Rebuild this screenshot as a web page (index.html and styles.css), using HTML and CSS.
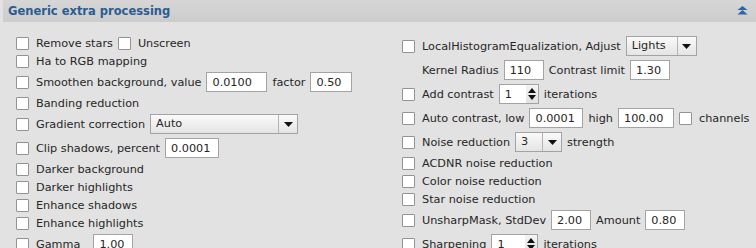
FILE: index.html
```
<!DOCTYPE html>
<html lang="en">
<head>
    <meta charset="UTF-8">
    <title>Generic extra processing</title>
    <link rel="stylesheet" href="styles.css">
</head>
<body>

    <!-- Panel -->
    <div class="panel">
        <div class="panel-head">
            <span class="panel-title">Generic extra processing</span>
            <svg class="collapse" width="11" height="9" viewBox="0 0 11 9">
                <path d="M5.5 0 L10.5 4 L0.5 4 Z" fill="#2c66a8"/>
                <path d="M5.5 4 L10.5 8.5 L0.5 8.5 Z" fill="#2c66a8"/>
            </svg>
        </div>

        <div class="panel-body">
            <!-- Left column -->
            <div class="col">
                <div class="row">
                    <input type="checkbox" class="cb"><span>Remove stars</span>
                    <input type="checkbox" class="cb cb-inline"><span>Unscreen</span>
                </div>
                <div class="row">
                    <input type="checkbox" class="cb"><span>Ha to RGB mapping</span>
                </div>
                <div class="row tall">
                    <input type="checkbox" class="cb"><span>Smoothen background, value</span>
                    <input type="text" class="num w61" value="0.0100">
                    <span>factor</span>
                    <input type="text" class="num w42" value="0.50">
                </div>
                <div class="row">
                    <input type="checkbox" class="cb"><span>Banding reduction</span>
                </div>
                <div class="row tall">
                    <input type="checkbox" class="cb"><span>Gradient correction</span>
                    <div class="select w148">
                        <span class="select-value">Auto</span>
                        <span class="select-arrow"><svg width="9" height="5" viewBox="0 0 9 5"><path d="M0 0 H9 L4.5 5 Z" fill="#111"/></svg></span>
                    </div>
                </div>
                <div class="row tall">
                    <input type="checkbox" class="cb"><span>Clip shadows, percent</span>
                    <input type="text" class="num w54" value="0.0001">
                </div>
                <div class="row">
                    <input type="checkbox" class="cb"><span>Darker background</span>
                </div>
                <div class="row">
                    <input type="checkbox" class="cb"><span>Darker highlights</span>
                </div>
                <div class="row">
                    <input type="checkbox" class="cb"><span>Enhance shadows</span>
                </div>
                <div class="row">
                    <input type="checkbox" class="cb"><span>Enhance highlights</span>
                </div>
                <div class="row tall">
                    <input type="checkbox" class="cb"><span class="gamma">Gamma</span>
                    <input type="text" class="num w40" value="1.00">
                </div>
            </div>

            <!-- Right column -->
            <div class="col">
                <div class="row tall">
                    <input type="checkbox" class="cb"><span>LocalHistogramEqualization, Adjust</span>
                    <div class="select w71">
                        <span class="select-value">Lights</span>
                        <span class="select-arrow"><svg width="9" height="5" viewBox="0 0 9 5"><path d="M0 0 H9 L4.5 5 Z" fill="#111"/></svg></span>
                    </div>
                </div>
                <div class="row tall indent">
                    <span>Kernel Radius</span>
                    <input type="text" class="num w40" value="110">
                    <span>Contrast limit</span>
                    <input type="text" class="num w40" value="1.30">
                </div>
                <div class="row tall">
                    <input type="checkbox" class="cb"><span>Add contrast</span>
                    <div class="spin w40">
                        <input type="text" value="1">
                        <span class="spin-btns">
                            <svg width="8" height="5" viewBox="0 0 8 5"><path d="M4 0 L8 5 H0 Z" fill="#111"/></svg>
                            <svg width="8" height="5" viewBox="0 0 8 5"><path d="M0 0 H8 L4 5 Z" fill="#111"/></svg>
                        </span>
                    </div>
                    <span>iterations</span>
                </div>
                <div class="row tall">
                    <input type="checkbox" class="cb"><span>Auto contrast, low</span>
                    <input type="text" class="num w54" value="0.0001">
                    <span>high</span>
                    <input type="text" class="num w56" value="100.00">
                    <input type="checkbox" class="cb cb-inline"><span>channels</span>
                </div>
                <div class="row tall">
                    <input type="checkbox" class="cb"><span>Noise reduction</span>
                    <div class="select w47">
                        <span class="select-value">3</span>
                        <span class="select-arrow"><svg width="9" height="5" viewBox="0 0 9 5"><path d="M0 0 H9 L4.5 5 Z" fill="#111"/></svg></span>
                    </div>
                    <span>strength</span>
                </div>
                <div class="row">
                    <input type="checkbox" class="cb"><span>ACDNR noise reduction</span>
                </div>
                <div class="row">
                    <input type="checkbox" class="cb"><span>Color noise reduction</span>
                </div>
                <div class="row">
                    <input type="checkbox" class="cb"><span>Star noise reduction</span>
                </div>
                <div class="row tall">
                    <input type="checkbox" class="cb"><span>UnsharpMask, StdDev</span>
                    <input type="text" class="num w40" value="2.00">
                    <span>Amount</span>
                    <input type="text" class="num w40" value="0.80">
                </div>
                <div class="row tall">
                    <input type="checkbox" class="cb"><span>Sharpening</span>
                    <div class="spin w47">
                        <input type="text" value="1">
                        <span class="spin-btns">
                            <svg width="8" height="5" viewBox="0 0 8 5"><path d="M4 0 L8 5 H0 Z" fill="#111"/></svg>
                            <svg width="8" height="5" viewBox="0 0 8 5"><path d="M0 0 H8 L4 5 Z" fill="#111"/></svg>
                        </span>
                    </div>
                    <span>iterations</span>
                </div>
            </div>
        </div>
    </div>

</body>
</html>
```

FILE: styles.css
```
body {
    margin: 0;
    background-color: #e2e2e2;
    font-family: "DejaVu Sans", Verdana, sans-serif;
    font-size: 11.25px;
    color: #262626;
    overflow: hidden;
}

/* Panel header */
.panel-head {
    display: flex;
    align-items: center;
    justify-content: space-between;
    height: 22px;
    margin-left: 3px;
    padding: 0 8px 0 5px;
    background: linear-gradient(#d6d6d6, #cccccc);
}

.panel-title {
    font-weight: bold;
    font-size: 11.5px;
    color: #2b5c91;
}

.collapse {
    margin-top: -2px;
}

/* Two columns of options */
.panel-body {
    display: grid;
    grid-template-columns: 386px 1fr;
    padding: 12px 0 0 16px;
}

.row {
    display: flex;
    align-items: center;
    gap: 5px;
    height: 18px;
    white-space: nowrap;
}

.row.tall {
    height: 24px;
}

.row.indent {
    padding-left: 20px;
}

/* Checkbox */
.cb {
    appearance: none;
    -webkit-appearance: none;
    width: 13px;
    height: 13px;
    margin: 0 2px 0 0;
    background-color: #fff;
    border: 1px solid #939393;
    border-radius: 1px;
    box-sizing: border-box;
    flex: none;
}

.cb-inline {
    margin-left: 0;
}

/* Number fields */
.num {
    height: 20px;
    padding: 0 5px;
    border: 1px solid #a3a3a3;
    background-color: #fff;
    font-family: inherit;
    font-size: inherit;
    color: #262626;
    box-sizing: border-box;
    outline: none;
}

.gamma {
    margin-right: 8px;
}

.w40 { width: 40px; }
.w42 { width: 42px; }
.w47 { width: 47px; }
.w54 { width: 54px; }
.w56 { width: 56px; }
.w61 { width: 61px; }
.w71 { width: 71px; }
.w148 { width: 148px; }

/* Drop-down */
.select {
    display: flex;
    height: 20px;
    border: 1px solid #a3a3a3;
    background: linear-gradient(#fafafa, #e4e4e4);
    box-sizing: border-box;
}

.select-value {
    flex: 1;
    padding-left: 5px;
    line-height: 18px;
}

.select-arrow {
    display: flex;
    align-items: center;
    justify-content: center;
    width: 18px;
    border-left: 1px solid #b5b5b5;
}

/* Spinner */
.spin {
    display: flex;
    height: 20px;
    border: 1px solid #a3a3a3;
    background-color: #fff;
    box-sizing: border-box;
}

.spin input {
    flex: 1;
    min-width: 0;
    border: none;
    padding: 0 5px;
    font-family: inherit;
    font-size: inherit;
    color: #262626;
    outline: none;
    background: transparent;
}

.spin-btns {
    display: flex;
    flex-direction: column;
    justify-content: center;
    align-items: center;
    gap: 2px;
    width: 12px;
    background: linear-gradient(#f4f4f4, #e2e2e2);
}
```
